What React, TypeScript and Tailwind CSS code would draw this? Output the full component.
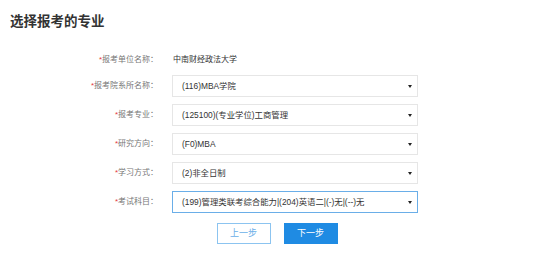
import React from "react";

const font = { fontFamily: '"Liberation Sans", "Noto Sans CJK SC", sans-serif' };

function Label({ text }: { text: string }) {
  return (
    <div className="w-[158px] shrink-0 text-right text-[8px] leading-[22px] text-[#777]">
      <span className="text-[#e4393c]">*</span>
      {text}：
    </div>
  );
}

function Select({ value, active }: { value: string; active?: boolean }) {
  return (
    <div
      className={`ml-[14px] flex h-[22px] w-[246px] items-center justify-between border bg-white pl-[9px] pr-[5px] text-[8.4px] text-[#333] ${
        active ? "border-[#6aaee8]" : "border-[#e6e6e6]"
      }`}
    >
      <span>{value}</span>
      <svg width="4" height="3" viewBox="0 0 4 3">
        <path d="M0 0 L4 0 L2 3 Z" fill="#222" />
      </svg>
    </div>
  );
}

export default function App() {
  const rows = [
    { label: "报考院系所名称", value: "(116)MBA学院" },
    { label: "报考专业", value: "(125100)(专业学位)工商管理" },
    { label: "研究方向", value: "(F0)MBA" },
    { label: "学习方式", value: "(2)非全日制" },
    { label: "考试科目", value: "(199)管理类联考综合能力|(204)英语二|(-)无|(--)无", active: true },
  ];
  return (
    <div className="h-[256px] w-full bg-white" style={font}>
      <div className="pl-[10px] pt-[13px] text-[13.5px] font-bold leading-[18px] text-[#333]">
        选择报考的专业
      </div>
      <div className="mt-[18px] flex h-[22px] items-center">
        <Label text="报考单位名称" />
        <div className="ml-[14px] pl-[1px] text-[8px] text-[#333]">中南财经政法大学</div>
      </div>
      <div className="mt-[4px] flex flex-col gap-[7px]">
        {rows.map((r) => (
          <div key={r.label} className="flex h-[22px] items-center">
            <Label text={r.label} />
            <Select value={r.value} active={r.active} />
          </div>
        ))}
      </div>
      <div className="mt-[10px] flex justify-center gap-[13px]">
        <button className="flex h-[21px] w-[54px] items-center justify-center border border-[#8cc4f0] bg-white text-[9px] text-[#6aaee8]">
          上一步
        </button>
        <button className="flex h-[21px] w-[54px] items-center justify-center border border-[#1f8be3] bg-[#1f8be3] text-[9px] text-white">
          下一步
        </button>
      </div>
    </div>
  );
}
